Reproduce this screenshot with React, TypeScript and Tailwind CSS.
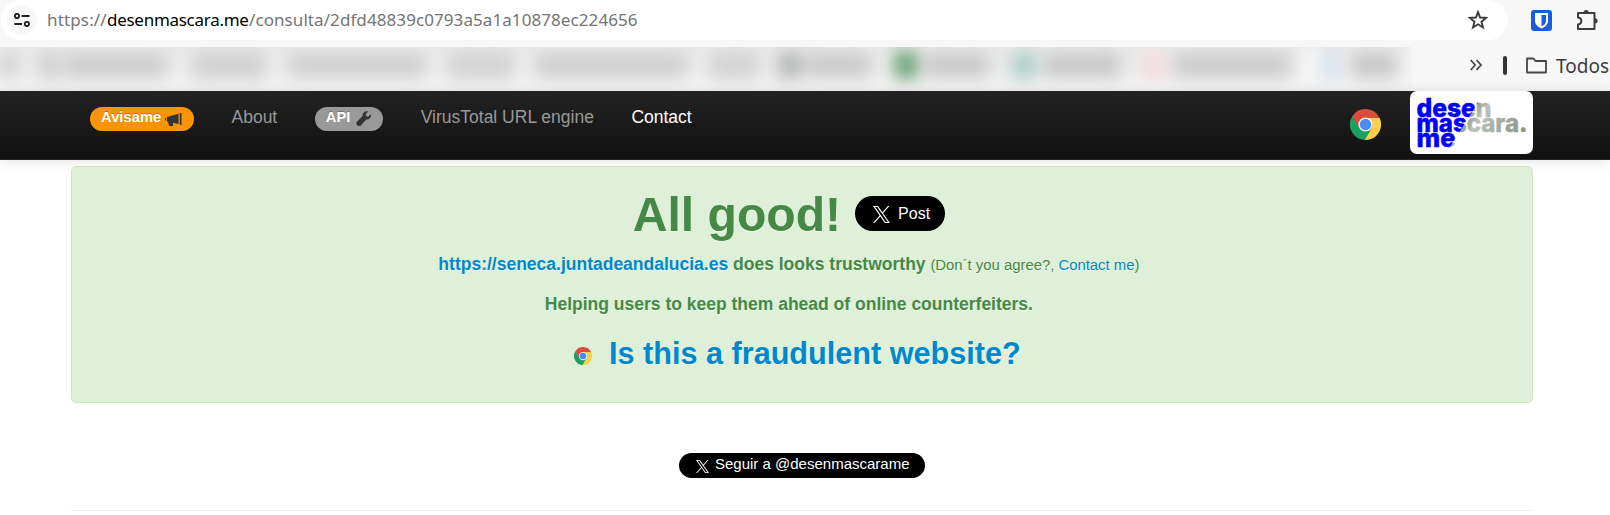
import React from "react";

function ChromeLogo({ className }: { className: string }) {
  return (
    <svg viewBox="0 0 48 48" className={className}>
      <path d="M3.2 12A24 24 0 0 0 24 48L33.6 29.5 24 24 14.5 29.5 4.1 11Z" fill="#1da05f" />
      <path d="M44.8 12A24 24 0 0 1 23 48L33.6 29.5 34.9 24 24 13H45.2Z" fill="#ffce44" />
      <path d="M3.6 11.4A24 24 0 0 1 45.2 13H24L14.5 29.5Z" fill="#dd4b3e" />
      <circle cx="24" cy="24" r="11" fill="#f4f4f4" />
      <circle cx="24" cy="24" r="8.8" fill="#4c8bf5" />
    </svg>
  );
}

function XLogo({ className }: { className: string }) {
  return (
    <svg viewBox="0 0 24 24" className={className} fill="#fff">
      <path d="M14.258 10.152 23.176 0h-2.113l-7.747 8.813L7.133 0H0l9.352 13.328L0 23.973h2.113l8.176-9.309 6.531 9.309h7.133zm-2.895 3.293-.949-1.328L2.875 1.56h3.246l6.086 8.523.945 1.328 7.91 11.078h-3.246z" />
    </svg>
  );
}

function SiteLogo() {
  return (
    <svg viewBox="0 0 123 63" className="h-[63px] w-[123px] shrink-0 rounded-[7px] bg-white">
      <defs>
        <linearGradient id="ink" gradientUnits="userSpaceOnUse" x1="0" y1="0" x2="118" y2="75">
          <stop offset="0.453" stopColor="#0000ff" />
          <stop offset="0.458" stopColor="#959b92" />
          <stop offset="0.52" stopColor="#bcc2b9" />
          <stop offset="0.7" stopColor="#a2a89f" />
          <stop offset="0.9" stopColor="#868b83" />
        </linearGradient>
      </defs>
      <g fill="url(#ink)" stroke="url(#ink)" strokeWidth="0.4" fontFamily="Inter, sans-serif" fontWeight="800" fontSize="25.5">
        <text x="6.500" y="25.500" textLength="75" lengthAdjust="spacingAndGlyphs">desen</text>
        <text x="6.500" y="41" textLength="111" lengthAdjust="spacingAndGlyphs">mascara.</text>
        <text x="6.500" y="56" textLength="39" lengthAdjust="spacingAndGlyphs">me</text>
      </g>
    </svg>
  );
}

function AddressBar() {
  return (
    <div className="flex h-10 items-center bg-[#f7f7f7]">
      <div className="ml-px flex h-10 w-[1507px] shrink-0 items-center rounded-full bg-white pl-[6px]">
        <div className="flex size-[30px] items-center justify-center rounded-full bg-[#f7f7f7]">
          <svg viewBox="0 0 16 14" className="h-[14px] w-4" fill="none" stroke="#1f1f1f" strokeWidth="1.9">
            <circle cx="3" cy="3" r="2.1" />
            <path d="M7.5 3H15.500M.4 11H8" />
            <circle cx="12.900" cy="11" r="2.1" />
          </svg>
        </div>
        <div className="ml-[10px] font-['Noto_Sans',sans-serif] text-[17px] leading-6 whitespace-pre text-[#747474]">
          <span className="inline-block w-[60px] tracking-[0.15px]">https://</span>
          <span className="inline-block w-[142px] tracking-[-0.28px] text-black">desenmascara.me</span>
          <span className="inline-block tracking-[0.08px]">/consulta/2dfd48839c0793a5a1a10878ec224656</span>
        </div>
        <svg viewBox="0 0 20 20" className="mr-[20px] ml-auto size-5" fill="none" stroke="#3c3c3c" strokeWidth="1.9">
          <path d="m10 2 2.1 5.5 6 .4-4.6 3.8 1.5 5.8-5-3.2-5 3.2 1.5-5.8L1.9 7.9l6-.4Z" />
        </svg>
      </div>
      <svg viewBox="0 0 21 21" className="ml-[23px] size-[21px] shrink-0">
        <rect width="21" height="21" rx="3" fill="#175ddc" />
        <path d="M4 3h13v8c0 4-4 6.500-6.500 7.500C8 17.500 4 15 4 11Z" fill="#fff" />
        <path d="M10.500 5H15v6c0 2.400-2.400 4.300-4.500 5.300Z" fill="#175ddc" />
      </svg>
      <svg viewBox="0 0 22 22" className="ml-[24px] size-[22px] shrink-0">
        <path d="M2 4H18.500V20H2V15.500C6.500 15 6.500 9.200 2 8.500Z" fill="none" stroke="#3c3c3c" strokeWidth="2" strokeLinejoin="round" />
        <path d="M7.500 3.500a2.600 2.600 0 0 1 5.200 0ZM19 9.200a2.600 2.600 0 0 1 0 5.200Z" fill="#3c3c3c" />
      </svg>
    </div>
  );
}

function BookmarksBar() {
  return (
    <div className="flex h-[51px] bg-[#f7f7f7]">
      <div className="mt-[7px] flex h-11 w-[1412px] shrink-0 overflow-hidden bg-[linear-gradient(#e9e9e9,#ececec_50%,#f5f5f5)]">
        <div className="flex h-9 w-full items-center blur-[8px]">
          <i className="h-6 w-[18px] shrink-0 bg-[#d3d3d3]" />
          <i className="ml-5 h-7 w-[24px] shrink-0 bg-[#d3d3d3]" />
          <i className="ml-1 h-6 w-[99px] shrink-0 bg-[#cdcdcd]" />
          <i className="ml-7 h-7 w-[72px] shrink-0 bg-[#d2d2d2]" />
          <i className="ml-6 h-6 w-[136px] shrink-0 bg-[#d0d0d0]" />
          <i className="ml-6 h-7 w-[64px] shrink-0 bg-[#d4d4d4]" />
          <i className="ml-6 h-6 w-[149px] shrink-0 bg-[#cfcfcf]" />
          <i className="ml-6 h-7 w-[48px] shrink-0 bg-[#d4d4d4]" />
          <i className="ml-5 h-7 w-[24px] shrink-0 bg-[#b9bbbb]" />
          <i className="ml-1 h-6 w-[64px] shrink-0 bg-[#cbcbcb]" />
          <i className="ml-6 h-7 w-[24px] shrink-0 bg-[#72a67a]" />
          <i className="ml-2 h-6 w-[62px] shrink-0 bg-[#cacaca]" />
          <i className="ml-6 h-7 w-[24px] shrink-0 bg-[#b0d0c9]" />
          <i className="ml-2 h-6 w-[76px] shrink-0 bg-[#c9c9c9]" />
          <i className="ml-[22px] h-7 w-[24px] shrink-0 bg-[#f6dce0]" />
          <i className="ml-2 h-6 w-[116px] shrink-0 bg-[#cccccc]" />
          <i className="ml-[12px] h-9 w-[18px] shrink-0 bg-[#f7f7f7]" />
          <i className="h-7 w-[20px] shrink-0 bg-[#d8e4ee]" />
          <i className="ml-3 h-6 w-[44px] shrink-0 bg-[#c8c8c8]" />
          <i className="ml-3 h-11 w-10 shrink-0 bg-[#f7f7f7]" />
        </div>
      </div>
      <svg viewBox="0 0 12 12" className="mt-[19px] ml-[58px] size-3 shrink-0" fill="none" stroke="#474747" strokeWidth="1.7">
        <path d="m.7 1 4.500 5-4.500 5M6.500 1 11 6l-4.500 5" />
      </svg>
      <div className="mt-4 ml-[21px] h-[19px] w-[4px] shrink-0 rounded-sm bg-[#333]" />
      <svg viewBox="0 0 21 17" className="mt-[17px] ml-[19px] h-[17px] w-[21px] shrink-0" fill="none" stroke="#444746" strokeWidth="1.8" strokeLinejoin="round">
        <path d="M1 1.500H7.500L9.500 4H20V15.500H1Z" />
      </svg>
      <div className="mt-[14px] ml-[9px] w-[54px] shrink-0 overflow-hidden font-['Noto_Sans',sans-serif] text-[19px] leading-6 text-[#3c3c3c]">Todos</div>
    </div>
  );
}

function NavBar() {
  return (
    <nav className="relative flex h-[69px] items-start border-b border-[#252525] bg-[linear-gradient(#222,#111)] text-[17.5px] leading-[24px] text-[#999] shadow-[0_1px_12px_rgba(0,0,0,0.12)]">
      <a className="mt-[16px] ml-[90px] flex h-6 w-[104px] rounded-full bg-[#f89406] pl-[11px] text-[14.8px] leading-[21px] font-bold text-white [text-shadow:0_-1px_0_rgba(0,0,0,0.25)]">
        Avisame
        <svg viewBox="0 0 17 13" className="mt-[6px] ml-1 h-[13px] w-[17px]" fill="#333">
          <path d="M2 4 13.500.8V11L8 9.800V13H4.200L3 8.800 2 8.500ZM0 5h1.200v2.500H0ZM14.800 0h1.700v12h-1.700Z" />
        </svg>
      </a>
      <a className="mt-[14px] ml-[37.5px]">About</a>
      <a className="mt-[16px] ml-[37.5px] flex h-6 w-[68px] rounded-full bg-[#999] pl-[11px] text-[14.8px] leading-[21px] font-bold text-white [text-shadow:0_-1px_0_rgba(0,0,0,0.25)]">
        API
        <svg viewBox="0 0 16 16" className="mt-[4px] ml-[6px] size-4" fill="#333">
          <path d="M14.800 3.200 12 5.700 10.200 5 9.700 3.300 12 .5C9.200-.4 6.300 1.500 6.500 5L.8 10.900c-1.800 2 1.500 5.700 4 3.500l5.400-5.900c3.300.4 5.600-2.500 4.600-5.300Z" />
        </svg>
      </a>
      <a className="mt-[14px] ml-[38px]">VirusTotal URL engine</a>
      <a className="mt-[14px] ml-[37.5px] text-white">Contact</a>
      <ChromeLogo className="mt-[18px] mr-[29px] ml-auto size-[31px] shrink-0" />
      <div className="mr-[77px]">
        <SiteLogo />
      </div>
    </nav>
  );
}

export default function App() {
  return (
    <div className="h-[515px] w-[1610px] overflow-hidden bg-white font-['Liberation_Sans',Arial,sans-serif]">
      <AddressBar />
      <BookmarksBar />
      <NavBar />
      <main className="relative mt-[6px] mr-[77px] ml-[71px]">
        <section className="flex h-[237px] flex-col items-center rounded-[5px] border border-[#d0e6be] bg-[#dff0d8] pt-[22px] pr-[43.75px] pl-[17.5px] text-[17.5px] leading-[25px] font-bold text-[#468847] [text-shadow:0_1px_0_rgba(255,255,255,0.5)]">
          <div className="flex h-[50px] items-start">
            <h1 className="text-[48.125px] leading-[50px]">All good!</h1>
            <button className="mt-[7px] ml-[14px] flex h-[35px] w-[90px] items-center rounded-full bg-black pl-[18px] text-[16px] font-normal text-white [text-shadow:none]">
              <XLogo className="mt-px size-[17px]" />
              <span className="ml-2 leading-[33px]">Post</span>
            </button>
          </div>
          <p className="mt-[13px] whitespace-pre">
            <a className="text-[#0088cc]">https://seneca.juntadeandalucia.es</a> does looks trustworthy <small className="text-[14.875px] font-normal">(Don´t you agree?, <a className="text-[#0088cc]">Contact me</a>)</small>
          </p>
          <p className="mt-[14px]">Helping users to keep them ahead of online counterfeiters.</p>
          <div className="mt-[11px] flex h-[50px] items-center pl-[17px]">
            <ChromeLogo className="mt-[6px] size-[18px]" />
            <a className="ml-[17px] text-[30.625px] leading-[50px] text-[#0088cc]">Is this a fraudulent website?</a>
          </div>
        </section>
        <div className="mt-[50px] flex h-[57px] justify-center">
          <a className="flex h-[25px] w-[246px] items-center rounded-full bg-black pl-[17px] text-[15px] text-white">
            <XLogo className="mt-px size-[13px]" />
            <span className="-mt-[4px] ml-[6px] leading-[21px]">Seguir a @desenmascarame</span>
          </a>
        </div>
        <hr className="border-0 border-t border-[#eee]" />
      </main>
    </div>
  );
}
